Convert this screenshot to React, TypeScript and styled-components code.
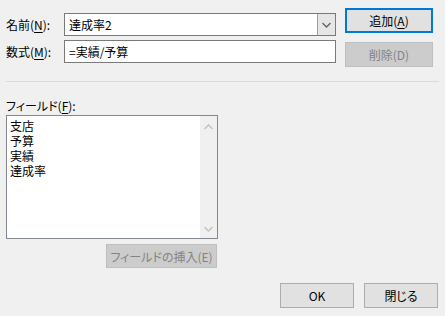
import React from "react"
import styled, { createGlobalStyle } from "styled-components"

const GlobalStyle = createGlobalStyle`
    html, body {
        margin: 0;
        padding: 0;
        background: #f0f0f0;
    }
    body {
        font-family: "Noto Sans CJK JP", "Noto Sans", sans-serif;
        font-size: 12px;
        font-feature-settings: "palt";
        color: #000;
    }
`

const fields = ["支店", "予算", "実績", "達成率"]

const Chevron = ({ up, color }: { up?: boolean; color: string }) => (
    <svg width="9" height="6" viewBox="0 0 9 6">
        <path
            d={up ? "M0.5 5 L4.5 1 L8.5 5" : "M0.5 1 L4.5 5 L8.5 1"}
            fill="none"
            stroke={color}
            strokeWidth="1.3"
        />
    </svg>
)

export default function App() {
    return (
        <>
            <GlobalStyle />
            <Dialog>
                <Top>
                    <Form>
                        <FormRow>
                            <Label>
                                名前(<U>N</U>):
                            </Label>
                            <Combo>
                                <ComboText>達成率2</ComboText>
                                <DropButton>
                                    <Chevron color="#606060" />
                                </DropButton>
                            </Combo>
                        </FormRow>
                        <FormRow>
                            <Label>
                                数式(<U>M</U>):
                            </Label>
                            <TextBox>=実績/予算</TextBox>
                        </FormRow>
                    </Form>
                    <SideButtons>
                        <Button $primary>
                            追加(<U>A</U>)
                        </Button>
                        <Button $disabled>削除(D)</Button>
                    </SideButtons>
                </Top>
                <Separator />
                <FieldLabel>
                    フィールド(<U>F</U>):
                </FieldLabel>
                <ListBox>
                    <ListItems>
                        {fields.map((f) => (
                            <Item key={f}>{f}</Item>
                        ))}
                    </ListItems>
                    <ScrollBar>
                        <Chevron up color="#c1c1c1" />
                        <Chevron color="#c1c1c1" />
                    </ScrollBar>
                </ListBox>
                <InsertRow>
                    <Button $disabled $width={111} $height={24}>
                        フィールドの挿入(E)
                    </Button>
                </InsertRow>
                <Footer>
                    <Button $width={74}>OK</Button>
                    <Button $width={74}>閉じる</Button>
                </Footer>
            </Dialog>
        </>
    )
}

const Dialog = styled.div`
    width: 445px;
    height: 316px;
    box-sizing: border-box;
    padding: 8px 0 0 6px;
    display: flex;
    flex-direction: column;
    background: #f0f0f0;
`

const Top = styled.div`
    display: flex;
    gap: 9px;
`

const Form = styled.div`
    display: flex;
    flex-direction: column;
    gap: 4px;
    padding-top: 5px;
`

const FormRow = styled.div`
    display: flex;
    align-items: center;
`

const Label = styled.div`
    width: 58px;
    line-height: 16px;
`

const U = styled.span`
    text-decoration: underline;
    text-underline-offset: 2px;
`

const Combo = styled.div`
    width: 272px;
    height: 23px;
    box-sizing: border-box;
    border: 1px solid #7a7a7a;
    background: #fff;
    display: flex;
`

const ComboText = styled.div`
    flex: 1;
    padding-left: 4px;
    line-height: 21px;
`

const DropButton = styled.div`
    width: 17px;
    border-left: 1px solid #a0a0a0;
    background: #e6e6e6;
    display: flex;
    align-items: center;
    justify-content: center;
`

const TextBox = styled.div`
    width: 272px;
    height: 23px;
    box-sizing: border-box;
    border: 1px solid #7a7a7a;
    background: #fff;
    padding-left: 4px;
    line-height: 21px;
`

const SideButtons = styled.div`
    display: flex;
    flex-direction: column;
    gap: 9px;
`

const Button = styled.div<{ $primary?: boolean; $disabled?: boolean; $width?: number; $height?: number }>`
    width: ${(p) => p.$width ?? 88}px;
    height: ${(p) => p.$height ?? 25}px;
    box-sizing: border-box;
    display: flex;
    align-items: center;
    justify-content: center;
    white-space: nowrap;
    background: ${(p) => (p.$disabled ? "#cccccc" : "#e1e1e1")};
    color: ${(p) => (p.$disabled ? "#838383" : "#000")};
    border: ${(p) => (p.$primary ? "2px solid #0078d7" : p.$disabled ? "1px solid #bfbfbf" : "1px solid #adadad")};
`

const Separator = styled.div`
    width: 433px;
    height: 1px;
    background: #dadada;
    margin-top: 14px;
`

const FieldLabel = styled.div`
    margin-top: 16px;
    line-height: 16px;
`

const ListBox = styled.div`
    margin-top: 1px;
    width: 212px;
    height: 124px;
    box-sizing: border-box;
    border: 1px solid #828790;
    background: #fff;
    display: flex;
`

const ListItems = styled.div`
    flex: 1;
    padding: 1.5px 0 0 3px;
`

const Item = styled.div`
    line-height: 15px;
`

const ScrollBar = styled.div`
    width: 17px;
    background: #f0f0f0;
    display: flex;
    flex-direction: column;
    align-items: center;
    justify-content: space-between;
    padding: 8px 0 6px;
`

const InsertRow = styled.div`
    display: flex;
    padding-left: 100px;
    margin-top: 5px;
`

const Footer = styled.div`
    display: flex;
    gap: 10px;
    padding-left: 274px;
    margin-top: 15px;
`
